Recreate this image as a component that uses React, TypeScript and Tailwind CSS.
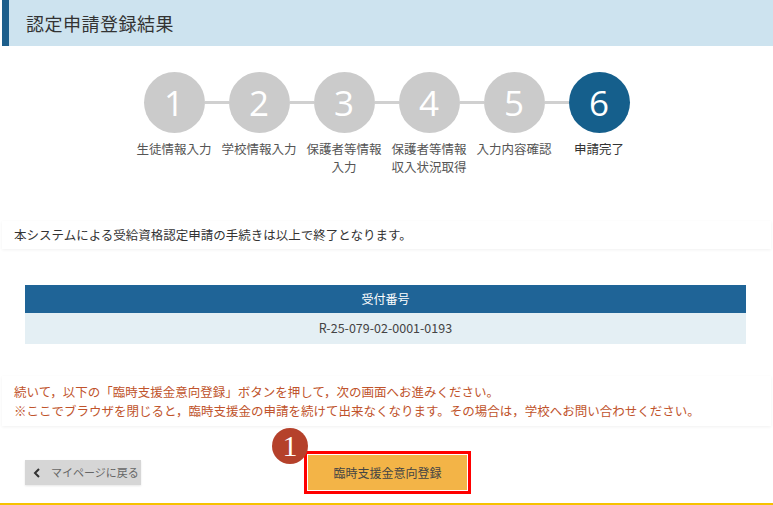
import React from 'react'

const steps = [
  { n: '1', label: ['生徒情報入力'] },
  { n: '2', label: ['学校情報入力'] },
  { n: '3', label: ['保護者等情報', '入力'] },
  { n: '4', label: ['保護者等情報', '収入状況取得'] },
  { n: '5', label: ['入力内容確認'] },
  { n: '6', label: ['申請完了'] },
]

const jp = { fontFamily: '"Noto Sans CJK JP", "Noto Sans", sans-serif' }

const App = () => {
  return (
    <div className="w-[773px] h-[505px] overflow-hidden bg-white flex flex-col" style={jp}>
      {/* header */}
      <div className="ml-[2px] h-[46px] bg-[#cde3ef] border-l-[7px] border-[#1d5f8c] flex items-center pl-[17px]">
        <h1 className="text-[18px] text-[#333] tracking-[0.5px]">認定申請登録結果</h1>
      </div>

      {/* steps */}
      <div className="mt-[26px] flex flex-col items-center">
        <div className="flex items-center">
          {steps.map((s, i) => (
            <React.Fragment key={s.n}>
              {i > 0 && <div className="w-[24px] h-[3px] bg-[#d0d0d0]" />}
              <div
                className={`w-[61px] h-[61px] rounded-full flex items-center justify-center text-white text-[35px] leading-none ${
                  i === 5 ? 'bg-[#155f8c]' : 'bg-[#cbcbcb]'
                }`}
                style={{ fontFamily: '"Open Sans", sans-serif' }}
              >
                {s.n}
              </div>
            </React.Fragment>
          ))}
        </div>
        <div className="mt-[7px] grid grid-cols-[repeat(6,85px)]">
          {steps.map((s, i) => (
            <div
              key={s.n}
              className={`text-center text-[12.5px] leading-[18px] whitespace-nowrap ${
                i === 5 ? 'text-[#333]' : 'text-[#555]'
              }`}
            >
              {s.label.map((l) => (
                <div key={l}>{l}</div>
              ))}
            </div>
          ))}
        </div>
      </div>

      {/* message */}
      <div className="mt-[45px] mx-[2px] h-[28px] flex items-center pl-[12px] shadow-[0_1px_3px_rgba(0,0,0,0.06)] text-[12.5px] text-[#333]">
        本システムによる受給資格認定申請の手続きは以上で終了となります。
      </div>

      {/* receipt number */}
      <div className="mt-[36px] mx-[25px] w-[721px]">
        <div className="h-[28px] bg-[#1f6497] flex items-center justify-center text-white text-[12px]">
          受付番号
        </div>
        <div className="h-[31px] bg-[#e4eff4] flex items-center justify-center text-[#444] text-[12.5px]">
          R-25-079-02-0001-0193
        </div>
      </div>

      {/* notice */}
      <div className="mt-[32px] mx-[2px] h-[50px] flex flex-col justify-center pl-[12px] shadow-[0_1px_3px_rgba(0,0,0,0.06)] text-[12.5px] leading-[19px] text-[#c0532b]">
        <p>続いて，以下の「臨時支援金意向登録」ボタンを押して，次の画面へお進みください。</p>
        <p>※ここでブラウザを閉じると，臨時支援金の申請を続けて出来なくなります。その場合は，学校へお問い合わせください。</p>
      </div>

      {/* buttons */}
      <div className="mt-[25px] flex items-center pl-[25px]">
        <button className="w-[116px] h-[25px] bg-[#d6d6d6] flex items-center gap-[10px] pl-[8px] text-[11px] text-[#666] shadow-[0_1px_2px_rgba(0,0,0,0.1)]">
          <svg width="8" height="10" viewBox="0 0 8 10" className="text-[#333]">
            <path d="M6 1 L2 5 L6 9" fill="none" stroke="currentColor" strokeWidth="2" />
          </svg>
          マイページに戻る
        </button>
        <div className="relative ml-[163px]">
          <div className="w-[167px] h-[43px] border-[3px] border-[#ff0000] bg-white p-[1px]">
            <button className="w-full h-full bg-[#f3b447] text-[12px] text-[#444]">臨時支援金意向登録</button>
          </div>
          <div
            className="absolute left-[-32px] top-[-23px] w-[36px] h-[36px] rounded-full bg-[#b5412b] flex items-center justify-center text-white text-[30px] leading-none"
            style={{ fontFamily: '"Liberation Serif", serif' }}
          >
            1
          </div>
        </div>
      </div>

      <div className="mt-auto h-[2px] bg-[#f6c200]" />
    </div>
  )
}

export default App
